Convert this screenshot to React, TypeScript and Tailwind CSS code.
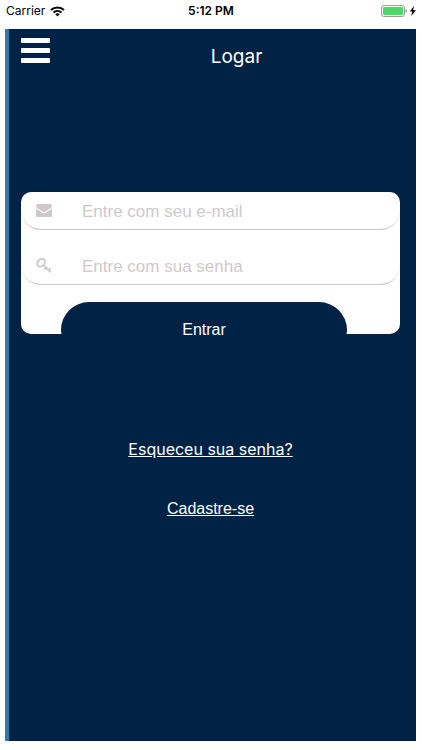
import React from "react";

function StatusBar() {
  return (
    <div className="grid h-[29px] grid-cols-3 items-center px-[6px] pb-[7px] font-['Inter',sans-serif] text-xs text-black">
      <div className="flex items-center gap-[5px]">
        <span>Carrier</span>
        <svg className="h-[11px] w-[15px]" viewBox="0 0 15 11" fill="none" stroke="#000" strokeWidth="2" aria-hidden="true">
          <path d="M1 4C4.600 .500 10.400 .500 14 4" />
          <path d="M3.500 6.500C5.800 4.400 9.200 4.400 11.500 6.500" />
          <path d="M5.200 8.100C6.500 7 8.500 7 9.800 8.100L7.500 10.500Z" fill="#000" stroke="none" />
        </svg>
      </div>
      <span className="text-center font-semibold">5:12 PM</span>
      <div className="flex items-center justify-end">
        <svg className="h-3 w-[36px]" viewBox="0 0 36 12" aria-hidden="true">
          <rect x="1.500" y=".5" width="23" height="11" rx="2.500" fill="#fff" stroke="#9b9b9b" />
          <rect x="3" y="2" width="20" height="8" rx="1" fill="#4cd964" />
          <path d="M25.500 4Q27 4.500 27 6Q27 7.500 25.500 8Z" fill="#9b9b9b" />
          <path d="M34 1L29.800 6.600H32.300L31.300 11L36 5.200H33.200Z" fill="#000" />
        </svg>
      </div>
    </div>
  );
}

function MailIcon() {
  return (
    <svg className="h-[14px] w-4" viewBox="0 0 16 14" fill="#d0c9ca" aria-hidden="true">
      <path d="M1.500 0H14.500Q16 0 16 1.500C16 2.700 15.200 3.500 14.300 4.200L9.700 7.400C8.600 8.200 7.400 8.200 6.300 7.400L1.700 4.200C.800 3.500 0 2.700 0 1.500Q0 0 1.500 0Z" />
      <path d="M0 4.300L5.500 8.300C7 9.500 9 9.500 10.500 8.300L16 4.300V11.500Q16 13 14.500 13H1.500Q0 13 0 11.500Z" />
    </svg>
  );
}

function KeyIcon() {
  return (
    <svg className="h-4 w-4" viewBox="0 0 16 16" fill="none" stroke="#d0c9ca" strokeWidth="2" aria-hidden="true">
      <ellipse cx="5" cy="4.800" rx="4.300" ry="3.300" transform="rotate(-45 5 4.800)" />
      <path d="M7 6.800L14.800 14.200" />
      <path d="M10.200 9.800L8.300 11.700M12.800 12.200L14.800 10.200" strokeWidth="1.800" />
    </svg>
  );
}

type FieldProps = { id: string; type: string; label: string; icon: React.ReactNode };

function Field({ id, type, label, icon }: FieldProps) {
  return (
    <div className="flex h-[38px] items-center rounded-b-[20px] border-b border-[#c9c9c9] pl-[15px]">
      <label htmlFor={id} aria-label={label} className="w-[46px] shrink-0">
        {icon}
      </label>
      <input
        id={id}
        type={type}
        placeholder={label}
        className="min-w-0 flex-1 bg-transparent pt-[3px] text-[17px] text-[#002345] outline-none placeholder:text-[#d0c9ca]"
      />
    </div>
  );
}

export default function App() {
  return (
    <div className="flex min-h-screen flex-col bg-white font-['Liberation_Sans',Arial,sans-serif]">
      <StatusBar />
      <main className="mr-[6px] mb-[9px] ml-[5px] flex flex-1 flex-col border-l-4 border-[#2e7ab2] bg-[#002345] pr-4 pl-3 text-white">
        <header className="grid grid-cols-[29px_1fr_29px] pt-[9px]">
          <button type="button" aria-label="Menu" className="flex h-[25px] flex-col justify-between">
            <span className="h-[5px] w-full rounded-[1px] bg-white" />
            <span className="h-[5px] w-full rounded-[1px] bg-white" />
            <span className="h-[5px] w-full rounded-[1px] bg-white" />
          </button>
          <h1 className="pt-1 pl-[52px] text-center font-['Inter',sans-serif] text-[19px] leading-[30px]">Logar</h1>
        </header>
        <form className="mt-[120px] h-[142px] rounded-[10px] bg-white" onSubmit={(e) => e.preventDefault()}>
          <div className="flex flex-col gap-[17px]">
            <Field id="email" type="email" label="Entre com seu e-mail" icon={<MailIcon />} />
            <Field id="senha" type="password" label="Entre com sua senha" icon={<KeyIcon />} />
            <button type="submit" className="mr-[53px] ml-10 h-14 rounded-full bg-[#002345] text-base text-white">
              Entrar
            </button>
          </div>
        </form>
        <nav className="mt-[103px] flex flex-col items-center gap-9">
          <a href="#senha" className="font-['Inter',sans-serif] text-base leading-6 underline">
            Esqueceu sua senha?
          </a>
          <a href="#cadastro" className="text-base leading-6 underline">
            Cadastre-se
          </a>
        </nav>
      </main>
    </div>
  );
}
